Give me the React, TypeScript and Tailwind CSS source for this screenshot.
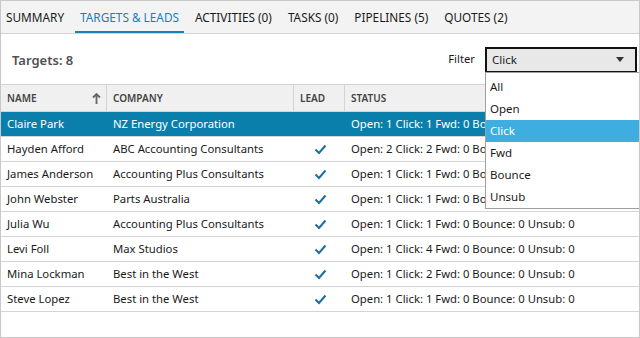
import React from "react";

const rows = [
  { name: "Claire Park", company: "NZ Energy Corporation", lead: false, status: "Open: 1 Click: 1 Fwd: 0 Bounce: 0 Unsub: 0", selected: true },
  { name: "Hayden Afford", company: "ABC Accounting Consultants", lead: true, status: "Open: 2 Click: 2 Fwd: 0 Bounce: 0 Unsub: 0" },
  { name: "James Anderson", company: "Accounting Plus Consultants", lead: true, status: "Open: 1 Click: 1 Fwd: 0 Bounce: 0 Unsub: 0" },
  { name: "John Webster", company: "Parts Australia", lead: true, status: "Open: 1 Click: 1 Fwd: 0 Bounce: 0 Unsub: 0" },
  { name: "Julia Wu", company: "Accounting Plus Consultants", lead: true, status: "Open: 1 Click: 1 Fwd: 0 Bounce: 0 Unsub: 0" },
  { name: "Levi Foll", company: "Max Studios", lead: true, status: "Open: 1 Click: 4 Fwd: 0 Bounce: 0 Unsub: 0" },
  { name: "Mina Lockman", company: "Best in the West", lead: true, status: "Open: 1 Click: 2 Fwd: 0 Bounce: 0 Unsub: 0" },
  { name: "Steve Lopez", company: "Best in the West", lead: true, status: "Open: 1 Click: 1 Fwd: 0 Bounce: 0 Unsub: 0" },
];

const tabs = [
  { label: "SUMMARY" },
  { label: "TARGETS & LEADS", active: true },
  { label: "ACTIVITIES (0)" },
  { label: "TASKS (0)" },
  { label: "PIPELINES (5)" },
  { label: "QUOTES (2)" },
];

const options = ["All", "Open", "Click", "Fwd", "Bounce", "Unsub"];

function Check() {
  return (
    <svg width="13" height="11" viewBox="0 0 13 11">
      <path d="M1.5 5.5 L5 9 L11.5 1.5" fill="none" stroke="#1b6ea0" strokeWidth="2" />
    </svg>
  );
}

export default function App() {
  return (
    <div
      className="w-[640px] h-[338px] relative bg-white border border-[#c8c8c8] flex flex-col overflow-hidden text-[#1a1a1a]"
      style={{ fontFamily: '"Noto Sans", "Open Sans", sans-serif' }}
    >
      {/* tabs */}
      <div className="h-[33px] shrink-0 bg-[#f3f3f3] border-b border-[#d4d4d4] flex items-stretch gap-[6px] text-[11.8px]">
        {tabs.map((t) => (
          <div
            key={t.label}
            className={
              "flex items-center px-[5px] pt-[3px] border-b-2 " +
              (t.active ? "text-[#1b7fb9] border-[#1b7fb9]" : "border-transparent")
            }
          >
            {t.label}
          </div>
        ))}
      </div>

      {/* toolbar */}
      <div className="h-[50px] shrink-0 flex items-center pl-[11px] pr-[2px] pt-[1px]">
        <div className="text-[13px] font-semibold text-[#505050] mt-[2px]">Targets: 8</div>
        <div className="flex-1" />
        <div className="text-[11.3px] mr-[10px]">Filter</div>
        <div className="w-[152px] h-[26px] border-2 border-[#111] bg-[#e8e8e8] flex items-center justify-between pl-[5px] pr-[11px] text-[11.5px]">
          <span className="mt-[1px]">Click</span>
          <svg width="8" height="5" viewBox="0 0 8 5">
            <path d="M0 0 L8 0 L4 5 Z" fill="#333" />
          </svg>
        </div>
      </div>

      {/* table */}
      <div className="flex flex-col text-[11.3px]">
        <div className="h-[28px] flex border-t border-b border-[#d4d4d4] bg-[#f0f0f0] text-[10px] font-semibold text-[#444]">
          <div className="w-[106px] flex items-center justify-between pl-[6px] pr-[5px] border-r border-[#d4d4d4]">
            <span>NAME</span>
            <svg width="9" height="11" viewBox="0 0 9 11">
              <path d="M4.5 1 L4.5 11 M1 4.5 L4.5 1 L8 4.5" fill="none" stroke="#666" strokeWidth="1.8" />
            </svg>
          </div>
          <div className="w-[187px] flex items-center pl-[6px] border-r border-[#d4d4d4]">COMPANY</div>
          <div className="w-[51px] flex items-center pl-[6px] border-r border-[#d4d4d4]">LEAD</div>
          <div className="flex-1 flex items-center pl-[6px]">STATUS</div>
        </div>
        {rows.map((r) => (
          <div
            key={r.name}
            className={
              "h-[25px] flex border-b border-[#d4d4d4] " +
              (r.selected ? "bg-[#0b7fab] text-white border-[#0b7fab]" : "")
            }
          >
            <div className="w-[106px] flex items-center pl-[6px]">{r.name}</div>
            <div className="w-[187px] flex items-center pl-[6px]">{r.company}</div>
            <div className="w-[51px] flex items-center justify-center pl-[2px]">{r.lead ? <Check /> : null}</div>
            <div className="flex-1 flex items-center pl-[6px] whitespace-nowrap">{r.status}</div>
          </div>
        ))}
      </div>

      {/* dropdown list */}
      <div className="absolute left-[484px] top-[71px] w-[156px] h-[137px] bg-white border border-[#a0a0a0] pt-[3px] text-[11.5px]">
        {options.map((o) => (
          <div
            key={o}
            className={
              "h-[22px] flex items-center pl-[4px] " +
              (o === "Click" ? "bg-[#3eaee0] text-white" : "")
            }
          >
            {o}
          </div>
        ))}
      </div>
    </div>
  );
}
